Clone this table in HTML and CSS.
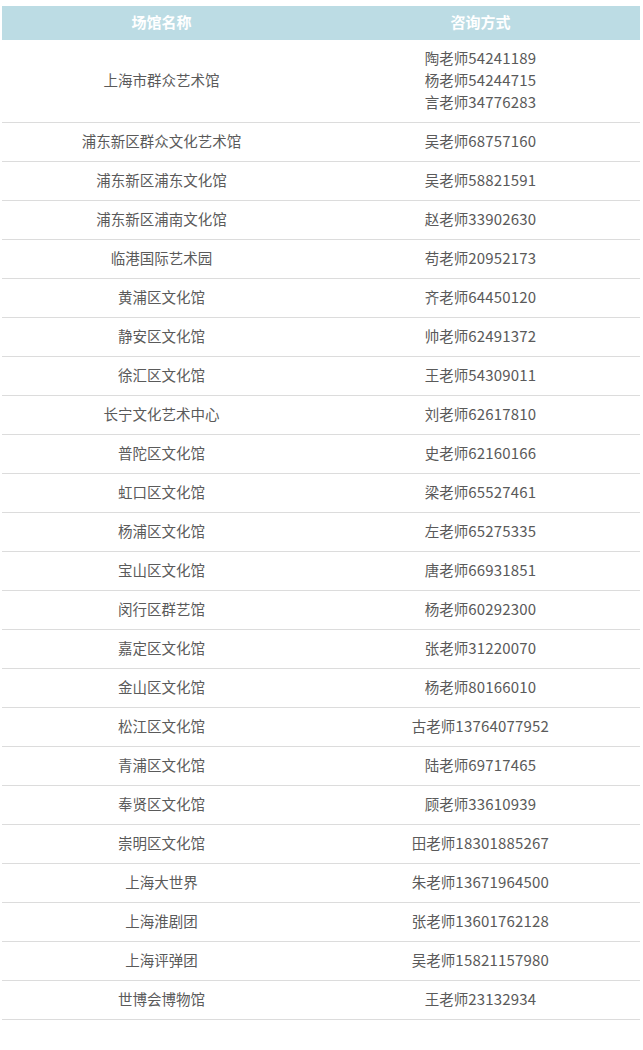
FILE: index.html
```html
<!DOCTYPE html>
<html lang="zh-CN">
<head>
<meta charset="utf-8">
<title>场馆名称</title>
<link rel="stylesheet" href="styles.css">
</head>
<body>
<div class="wrap">
<table class="venues">
<thead>
<tr><th>场馆名称</th><th>咨询方式</th></tr>
</thead>
<tbody>
<tr><td>上海市群众艺术馆</td><td>陶老师<span class="num">54241189</span><br>杨老师<span class="num">54244715</span><br>言老师<span class="num">34776283</span></td></tr>
<tr><td>浦东新区群众文化艺术馆</td><td>吴老师<span class="num">68757160</span></td></tr>
<tr><td>浦东新区浦东文化馆</td><td>吴老师<span class="num">58821591</span></td></tr>
<tr><td>浦东新区浦南文化馆</td><td>赵老师<span class="num">33902630</span></td></tr>
<tr><td>临港国际艺术园</td><td>苟老师<span class="num">20952173</span></td></tr>
<tr><td>黄浦区文化馆</td><td>齐老师<span class="num">64450120</span></td></tr>
<tr><td>静安区文化馆</td><td>帅老师<span class="num">62491372</span></td></tr>
<tr><td>徐汇区文化馆</td><td>王老师<span class="num">54309011</span></td></tr>
<tr><td>长宁文化艺术中心</td><td>刘老师<span class="num">62617810</span></td></tr>
<tr><td>普陀区文化馆</td><td>史老师<span class="num">62160166</span></td></tr>
<tr><td>虹口区文化馆</td><td>梁老师<span class="num">65527461</span></td></tr>
<tr><td>杨浦区文化馆</td><td>左老师<span class="num">65275335</span></td></tr>
<tr><td>宝山区文化馆</td><td>唐老师<span class="num">66931851</span></td></tr>
<tr><td>闵行区群艺馆</td><td>杨老师<span class="num">60292300</span></td></tr>
<tr><td>嘉定区文化馆</td><td>张老师<span class="num">31220070</span></td></tr>
<tr><td>金山区文化馆</td><td>杨老师<span class="num">80166010</span></td></tr>
<tr><td>松江区文化馆</td><td>古老师<span class="num">13764077952</span></td></tr>
<tr><td>青浦区文化馆</td><td>陆老师<span class="num">69717465</span></td></tr>
<tr><td>奉贤区文化馆</td><td>顾老师<span class="num">33610939</span></td></tr>
<tr><td>崇明区文化馆</td><td>田老师<span class="num">18301885267</span></td></tr>
<tr><td>上海大世界</td><td>朱老师<span class="num">13671964500</span></td></tr>
<tr><td>上海淮剧团</td><td>张老师<span class="num">13601762128</span></td></tr>
<tr><td>上海评弹团</td><td>吴老师<span class="num">15821157980</span></td></tr>
<tr><td>世博会博物馆</td><td>王老师<span class="num">23132934</span></td></tr>
</tbody>
</table>
</div>
</body>
</html>
```
FILE: styles.css
```css
html, body {
  margin: 0;
  padding: 0;
  background: #ffffff;
}
.wrap {
  padding: 6px 3px 0 2px;
}
.venues {
  width: 638px;
  border-collapse: collapse;
  table-layout: fixed;
  font-family: "Noto Sans CJK SC", "Open Sans", sans-serif;
}
.venues th {
  background: #bcdce4;
  color: #ffffff;
  font-size: 15px;
  font-weight: bold;
  line-height: 22px;
  padding: 5px 0 7px;
  text-align: center;
}
.venues td {
  color: #5a5a5a;
  font-size: 14.5px;
  line-height: 22px;
  padding: 7px 0 9px;
  text-align: center;
  border-bottom: 1px solid #dcdcdc;
}
.num {
  font-size: 15px;
  letter-spacing: 0.2px;
}
```
